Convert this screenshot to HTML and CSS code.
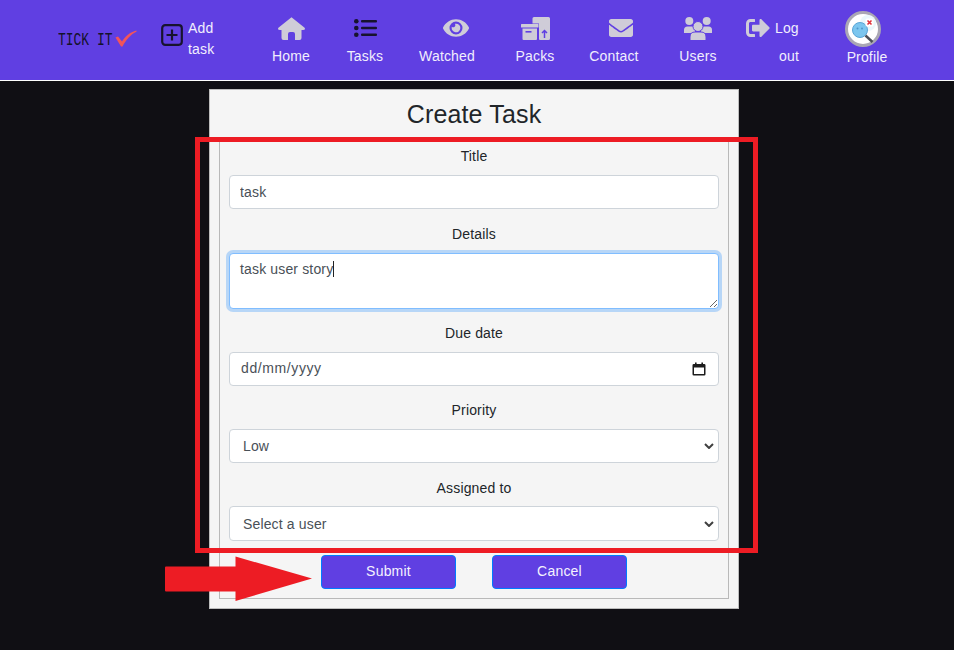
FILE: index.html
```html
<!DOCTYPE html>
<html lang="en">
<head>
<meta charset="utf-8">
<title>Create Task</title>
<link rel="stylesheet" href="styles.css">
</head>
<body>
<header class="topbar">
  <div class="brand-area">
    <a class="logo"><span class="logo-text">TICK IT</span>
      <svg class="logo-check" width="22" height="17" viewBox="0 0 22 17"><path fill="#f2545b" d="M0.5 7.5 L3 6.5 L7 11.5 C10 6.5 15 2 21.5 0.5 L21.5 1.8 C16 4 11 10 7.5 16.5 L6 16.5 Z"/></svg>
    </a>
    <a class="add-task">
      <svg class="add-icon" width="22" height="22" viewBox="0 0 22 22"><rect x="1.2" y="1.2" width="19.6" height="19.6" rx="3" fill="none" stroke="#17132e" stroke-width="2.2"/><path d="M11 5.5V16.5M5.5 11H16.5" stroke="#17132e" stroke-width="2.2"/></svg>
      <span class="add-label">Add<br>task</span>
    </a>
  </div>
  <a class="nav-item">
    <span class="nav-icon"><svg width="27" height="23" viewBox="0 0 27 23"><path class="ico" d="M13.5 0.3 L26.6 10.8 Q27.8 13 25 13 L23.5 13 L23.5 21 Q23.5 23 21.5 23 L17 23 L17 17 Q17 15 15 15 L12 15 Q10 15 10 17 L10 23 L5.5 23 Q3.5 23 3.5 21 L3.5 13 L2 13 Q-0.8 13 0.4 10.8 Z"/></svg></span>
    <span>Home</span>
  </a>
  <a class="nav-item">
    <span class="nav-icon"><svg width="23" height="18" viewBox="0 0 23 18"><g fill="#17132e"><circle cx="2.3" cy="2.3" r="2.3"/><circle cx="2.3" cy="9" r="2.3"/><circle cx="2.3" cy="15.7" r="2.3"/><rect x="7" y="0.9" width="16" height="2.6" rx="1"/><rect x="7" y="7.7" width="16" height="2.6" rx="1"/><rect x="7" y="14.5" width="16" height="2.6" rx="1"/></g></svg></span>
    <span>Tasks</span>
  </a>
  <a class="nav-item">
    <span class="nav-icon shift-eye"><svg width="26" height="24" viewBox="0 0 576 512"><path class="ico" d="M572.52 241.4C518.29 135.59 410.93 64 288 64S57.68 135.64 3.48 241.41a32.35 32.35 0 0 0 0 29.19C57.71 376.41 165.07 448 288 448s230.32-71.64 284.52-177.41a32.35 32.35 0 0 0 0-29.19zM288 400a144 144 0 1 1 144-144 143.93 143.93 0 0 1-144 144zm0-240a95.31 95.31 0 0 0-25.31 3.79 47.85 47.85 0 0 1-66.9 66.9A95.78 95.78 0 1 0 288 160z"/></svg></span>
    <span>Watched</span>
  </a>
  <a class="nav-item">
    <span class="nav-icon"><svg width="29" height="23" viewBox="0 0 29 23"><path class="ico" d="M13 0 H27.5 Q29 0 29 1.5 V21.5 Q29 23 27.5 23 H19 Q18 23 18 22 V6.5 H11.5 V1.5 Q11.5 0 13 0 Z"/><rect class="ico" x="0" y="7" width="17.5" height="3.5" rx="0.5"/><path class="ico" d="M1.5 11.5 H16 V22 Q16 23 15 23 H2.5 Q1.5 23 1.5 22 Z"/><rect class="ico-cut" x="4.5" y="14" width="6" height="1.6"/><path d="M23.5 21 V13.5 M21 16 L23.5 13.5 L26 16" fill="none" stroke="#603fe2" stroke-width="1.5"/></svg></span>
    <span>Packs</span>
  </a>
  <a class="nav-item">
    <span class="nav-icon shift-mail"><svg width="24" height="24" viewBox="0 0 512 512"><path class="ico" d="M502.3 190.8c3.9-3.1 9.7-.2 9.7 4.7V400c0 26.5-21.5 48-48 48H48c-26.5 0-48-21.5-48-48V195.6c0-5 5.7-7.8 9.7-4.7 22.4 17.4 52.1 39.5 154.1 113.6 21.1 15.4 56.7 47.8 92.2 47.6 35.7.3 72-32.8 92.3-47.6 102-74.1 131.6-96.3 154-113.7zM256 320c23.2.4 56.6-29.2 73.4-41.4 132.7-96.3 142.8-104.7 173.4-128.7 5.8-4.5 9.2-11.5 9.2-18.9v-19c0-26.5-21.5-48-48-48H48C21.5 64 0 85.5 0 112v19c0 7.4 3.4 14.3 9.2 18.9 30.6 23.9 40.7 32.4 173.4 128.7 16.8 12.2 50.2 41.8 73.4 41.4z"/></svg></span>
    <span>Contact</span>
  </a>
  <a class="nav-item">
    <span class="nav-icon"><svg width="28" height="23" viewBox="0 0 28 23"><g class="ico"><circle cx="5.3" cy="4" r="4"/><circle cx="22.7" cy="4" r="4"/><path d="M0 16 V13 Q0 9.5 3.5 9.5 H8 Q11 9.5 11 13 V16 Z"/><path d="M28 16 V13 Q28 9.5 24.5 9.5 H20 Q17 9.5 17 13 V16 Z"/><circle class="ico-ring" cx="14" cy="9.5" r="5"/><path class="ico-ring" d="M6 23.5 V20 Q6 15 11 15 H17 Q22 15 22 20 V23.5 Z"/></g></svg></span>
    <span>Users</span>
  </a>
  <a class="logout">
    <span class="logout-top">
      <svg width="24" height="24" viewBox="0 0 512 512"><path class="ico" d="M497 273L329 441c-15 15-41 4.5-41-17v-96H152c-13.3 0-24-10.7-24-24v-96c0-13.3 10.7-24 24-24h136V88c0-21.4 25.9-32 41-17l168 168c9.3 9.4 9.3 24.6 0 34zM192 436v-40c0-6.6-5.4-12-12-12H96c-17.7 0-32-14.3-32-32V160c0-17.7 14.3-32 32-32h84c6.6 0 12-5.4 12-12V76c0-6.6-5.4-12-12-12H96c-53 0-96 43-96 96v192c0 53 43 96 96 96h84c6.6 0 12-5.4 12-12z"/></svg>
      <span>Log</span>
    </span>
    <span class="logout-bottom">out</span>
  </a>
  <a class="profile">
    <svg class="avatar" width="36" height="36" viewBox="0 0 36 36">
      <circle cx="18" cy="18" r="16.5" fill="#fff" stroke="#aaa7b4" stroke-width="3"/>
      <circle cx="23" cy="12" r="8" fill="#eaf7fc"/>
      <circle cx="15" cy="19" r="7.5" fill="#7cc6ef" stroke="#5aa5d6" stroke-width="1"/>
      <circle cx="12.5" cy="17.5" r="1" fill="#4f97cc"/><circle cx="17" cy="17.5" r="1" fill="#4f97cc"/>
      <path d="M20.5 24.5L27.5 31" stroke="#4b4f58" stroke-width="2.4"/>
      <rect x="20.5" y="7.5" width="8" height="8" rx="1.5" fill="#fff"/>
      <path d="M22.5 9.5L26.5 13.5M26.5 9.5L22.5 13.5" stroke="#e0323c" stroke-width="1.6"/>
    </svg>
    <span class="profile-label">Profile</span>
  </a>
</header>

<main class="page">
  <section class="card">
    <h1 class="card-title">Create Task</h1>
    <form class="fields">
      <div class="group">
        <label class="field-label">Title</label>
        <input class="control" type="text" value="task">
      </div>
      <div class="group details">
        <label class="field-label">Details</label>
        <div class="area-wrap">
          <textarea class="control area">task user story</textarea>
          <span class="caret"></span>
        </div>
      </div>
      <div class="group">
        <label class="field-label">Due date</label>
        <div class="control date">
          <span>dd/mm/yyyy</span>
          <svg width="14" height="14" viewBox="0 0 14 14"><path fill="#1c1c1c" d="M3 0.5H4.6V2H9.4V0.5H11V2H12.2Q13.5 2 13.5 3.3V12.2Q13.5 13.5 12.2 13.5H1.8Q0.5 13.5 0.5 12.2V3.3Q0.5 2 1.8 2H3ZM2 5.5V12H12V5.5Z"/></svg>
        </div>
      </div>
      <div class="group">
        <label class="field-label">Priority</label>
        <select class="control pick"><option>Low</option><option>Medium</option><option>High</option></select>
      </div>
      <div class="group last">
        <label class="field-label">Assigned to</label>
        <select class="control pick"><option>Select a user</option></select>
      </div>
      <div class="actions">
        <button class="btn" type="button">Submit</button>
        <button class="btn" type="button">Cancel</button>
      </div>
    </form>
  </section>
</main>

<div class="mark-box"></div>
<svg class="mark-arrow" width="148" height="46" viewBox="0 0 148 46"><path fill="#ed1c24" d="M1 10.5H70.5V0.5L147 22.5L70.5 45V35.5H1Q0 35.5 0 34.5V11.5Q0 10.5 1 10.5Z"/></svg>
</body>
</html>
```

FILE: styles.css
```css
* { box-sizing: border-box; }
html, body { margin: 0; height: 650px; overflow: hidden; }
body {
  position: relative;
  background: #100f14;
  color: #212529;
  font-family: "Liberation Sans", Arial, sans-serif;
  font-size: 14px;
  line-height: 21px;
  letter-spacing: .15px;
}

/* top bar */
.topbar {
  display: grid;
  grid-template-columns: 254px 74px 74px 90px 86px 72px 96px 76px 90px;
  height: 81px;
  background: #603fe2;
  border-bottom: 1px solid #fff;
  color: #f1eefd;
}
.ico { fill: #cfccd8; }
.ico-cut { fill: #603fe2; }
.ico-ring { fill: #cfccd8; stroke: #603fe2; stroke-width: 1; }

.brand-area { display: flex; padding-left: 58px; }
.logo { display: flex; align-items: flex-start; width: 103px; padding-top: 30px; }
.logo-text {
  flex: none;
  width: 55px;
  margin-top: 1px;
  font-family: "Liberation Mono", monospace;
  font-size: 18px;
  line-height: 18px;
  letter-spacing: 0;
  color: #14122a;
  white-space: nowrap;
  transform: scaleX(.72);
  transform-origin: left center;
}
.logo-check { margin-left: 2px; }
.add-task { display: flex; align-items: flex-start; gap: 5px; padding-top: 18px; }
.add-icon { margin-top: 6px; }
.add-label { white-space: nowrap; }

.nav-item {
  display: flex;
  flex-direction: column;
  align-items: center;
  padding-top: 16px;
}
.nav-icon { display: flex; align-items: center; height: 24px; margin-bottom: 6px; }
.shift-eye { margin-left: 18px; }
.shift-mail { margin-left: 14px; }
.nav-item > span:last-child { line-height: 20px; }

.logout { display: flex; flex-direction: column; width: 53px; padding-top: 16px; }
.logout-top { display: flex; align-items: center; gap: 5px; height: 24px; margin-bottom: 6px; }
.logout-bottom { align-self: flex-end; line-height: 20px; }

.profile { display: flex; flex-direction: column; align-items: center; padding-top: 11px; }
.avatar { margin-right: 9px; }
.profile-label { line-height: 20px; }

/* card */
.page { display: flex; justify-content: center; padding: 8px 6px 0 0; }
.card {
  width: 530px;
  height: 520px;
  padding: 0 9px 9px;
  background: #f5f5f5;
  border: 1px solid #bdbdbd;
}
.card-title {
  margin: 0;
  height: 47px;
  font-size: 25px;
  font-weight: 400;
  line-height: 49px;
  text-align: center;
}
.fields {
  height: 462px;
  padding: 8px 9px 0;
  border: 1px solid #b9b9b9;
}
.group { margin-bottom: 14.5px; }
.group.details { margin-bottom: 14px; }
.group.last { margin-bottom: 14.1px; }
.group.last .field-label { margin-bottom: 7.9px; }
.group.last .control { height: 34.5px; padding-top: 1px; }
.field-label { display: block; margin-bottom: 8px; text-align: center; }
.control {
  display: block;
  width: 100%;
  height: 34px;
  padding: 0 10px;
  background: #fff;
  border: 1px solid #ced4da;
  border-radius: 4px;
  color: #495057;
  font: 14px/21px "Liberation Sans", Arial, sans-serif;
  letter-spacing: .15px;
  outline: none;
}
.area-wrap { position: relative; }
.area {
  height: 56px;
  padding: 5px 10px;
  border-color: #80bdff;
  box-shadow: 0 0 0 3px rgba(0, 123, 255, .25);
  resize: vertical;
}
.caret {
  position: absolute;
  left: 104px;
  top: 8px;
  width: 1px;
  height: 16px;
  background: #222;
}
.date {
  display: flex;
  align-items: center;
  justify-content: space-between;
  padding: 0 12px 0 11px;
  letter-spacing: .6px;
}
.pick {
  appearance: none;
  -webkit-appearance: none;
  padding-left: 13px;
  background-image: url("data:image/svg+xml,%3Csvg xmlns='http://www.w3.org/2000/svg' width='10' height='6' viewBox='0 0 10 6'%3E%3Cpath d='M1 1L5 5L9 1' fill='none' stroke='%23404040' stroke-width='2'/%3E%3C/svg%3E");
  background-repeat: no-repeat;
  background-position: right 4px center;
}
.actions { display: flex; justify-content: center; gap: 36px; }
.btn {
  width: 135px;
  height: 34px;
  padding: 0 0 1px;
  background: #603fe2;
  border: 1px solid #007bff;
  border-radius: 4px;
  color: #f4f2fe;
  font: 14px/21px "Liberation Sans", Arial, sans-serif;
  letter-spacing: .2px;
}

/* red review annotations drawn over the page */
.mark-box {
  position: absolute;
  left: 195px;
  top: 137px;
  width: 563px;
  height: 416px;
  border: 5px solid #ed1c24;
}
.mark-arrow { position: absolute; left: 165px; top: 556px; }
```
